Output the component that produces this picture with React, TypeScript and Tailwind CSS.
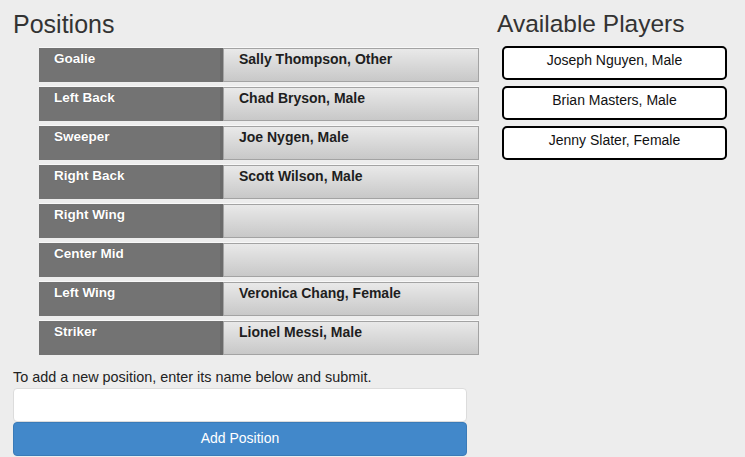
import React, { useState } from 'react';

interface Slot {
  position: string;
  player: string;
}

const slots: Slot[] = [
  { position: 'Goalie', player: 'Sally Thompson, Other' },
  { position: 'Left Back', player: 'Chad Bryson, Male' },
  { position: 'Sweeper', player: 'Joe Nygen, Male' },
  { position: 'Right Back', player: 'Scott Wilson, Male' },
  { position: 'Right Wing', player: '' },
  { position: 'Center Mid', player: '' },
  { position: 'Left Wing', player: 'Veronica Chang, Female' },
  { position: 'Striker', player: 'Lionel Messi, Male' },
];

const available = ['Joseph Nguyen, Male', 'Brian Masters, Male', 'Jenny Slater, Female'];

const App: React.FC = () => {
  const [name, setName] = useState('');

  return (
    <div className="min-h-screen bg-[#ededed] font-['Liberation_Sans',Arial,sans-serif] text-[#222] flex">
      {/* positions column */}
      <div className="w-[497px] shrink-0 pl-[13px] pt-[9px]">
        <h2 className="text-[25px] leading-[30px] text-[#333]">Positions</h2>
        <div className="ml-[26px] mt-[8px] w-[440px] flex flex-col gap-[4px]">
          {slots.map((s) => (
            <div key={s.position} className="h-[35px] flex border-t border-t-[#f8f8f8]">
              <div className="w-[184px] shrink-0 bg-[#737373] border-r-[3px] border-r-[#6a6a6a] pl-[15px] pt-[2px] text-white font-bold text-[13.5px] leading-[17px] [text-shadow:0_0_1px_rgba(0,0,0,0.3)]">
                {s.position}
              </div>
              <div className="flex-1 border border-[#a3a3a3] bg-gradient-to-b from-[#e9e9e9] to-[#c8c8c8] pl-[15px] pt-[2px] font-bold text-[14px] leading-[17px] text-[#1e1e1e]">
                {s.player}
              </div>
            </div>
          ))}
        </div>
        <p className="mt-[13px] text-[14.4px] leading-[18px] text-[#222]">
          To add a new position, enter its name below and submit.
        </p>
        <div className="w-[454px] mt-[2px] flex flex-col">
          <input
            value={name}
            onChange={(e) => setName(e.target.value)}
            className="h-[34px] bg-white border border-[#dcdcdc] rounded-[4px] px-3 text-[14px] outline-none"
          />
          <button className="h-[34px] bg-[#4288ca] border border-[#3a7bb8] rounded-[4px] text-white text-[14px] pb-[1px]">
            Add Position
          </button>
        </div>
      </div>

      {/* available players column */}
      <div className="pt-[9px]">
        <h2 className="text-[24.5px] leading-[30px] text-[#333]">Available Players</h2>
        <div className="ml-[5px] mt-[7px] w-[225px] flex flex-col gap-[6px]">
          {available.map((p) => (
            <div
              key={p}
              className="h-[34px] bg-white border-2 border-black rounded-[5px] flex items-center justify-center pb-[5px] text-[14px] text-[#111]"
            >
              {p}
            </div>
          ))}
        </div>
      </div>
    </div>
  );
};

export default App;
